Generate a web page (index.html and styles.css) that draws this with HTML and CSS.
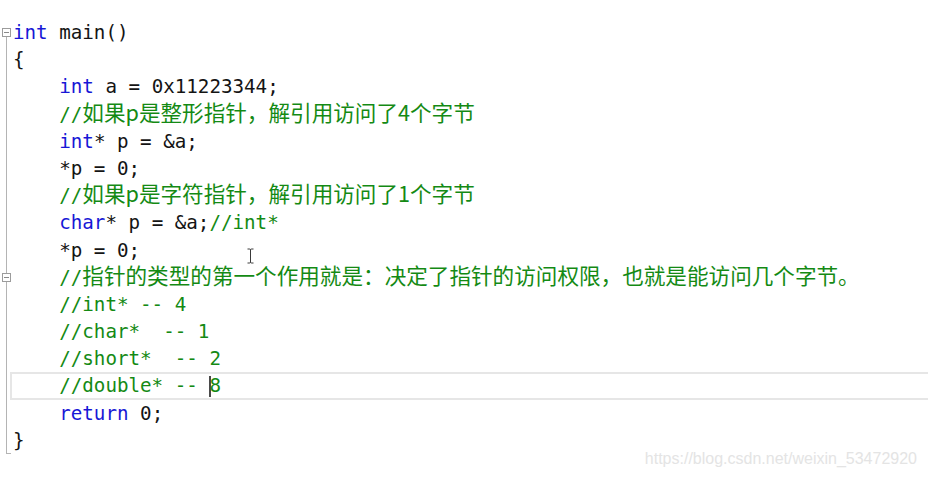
FILE: index.html
```html
<!DOCTYPE html>
<html lang="zh-CN">
<head>
<meta charset="utf-8">
<title>main.c</title>
<link rel="stylesheet" href="styles.css">
</head>
<body>
<div class="editor">
  <svg class="gutter" width="13" height="477" viewBox="0 0 13 477" xmlns="http://www.w3.org/2000/svg">
    <rect x="2.5" y="28.5" width="8" height="8" fill="#fff" stroke="#9c9c9c"/>
    <line x1="4" y1="32.5" x2="9" y2="32.5" stroke="#8a8a8a"/>
    <line x1="6.5" y1="37" x2="6.5" y2="273" stroke="#b4b4b4"/>
    <rect x="2.5" y="273.5" width="8" height="8" fill="#fff" stroke="#9c9c9c"/>
    <line x1="4" y1="277.5" x2="9" y2="277.5" stroke="#8a8a8a"/>
    <line x1="6.5" y1="282" x2="6.5" y2="454" stroke="#b4b4b4"/>
    <line x1="6.5" y1="453.5" x2="11" y2="453.5" stroke="#b4b4b4"/>
  </svg>
  <div class="code">
    <div class="ln"><span class="kw">int</span> main()</div>
    <div class="ln">{</div>
    <div class="ln">    <span class="kw">int</span> a = 0x11223344;</div>
    <div class="ln cm">    //<span class="cj">如果p是整形指针，解引用访问了4个字节</span></div>
    <div class="ln">    <span class="kw">int</span>* p = &amp;a;</div>
    <div class="ln">    *p = 0;</div>
    <div class="ln cm">    //<span class="cj">如果p是字符指针，解引用访问了1个字节</span></div>
    <div class="ln">    <span class="kw">char</span>* p = &amp;a;<span class="cmt">//int*</span></div>
    <div class="ln">    *p = 0;</div>
    <div class="ln cm">    //<span class="cj">指针的类型的第一个作用就是：决定了指针的访问权限，也就是能访问几个字节。</span></div>
    <div class="ln cm">    //int* -- 4</div>
    <div class="ln cm">    //char*  -- 1</div>
    <div class="ln cm">    //short*  -- 2</div>
    <div class="ln cm cur">    //double* -- <span class="caret"></span>8</div>
    <div class="ln">    <span class="kw">return</span> 0;</div>
    <div class="ln">}</div>
  </div>
</div>
<svg class="ibeam" width="9" height="16" viewBox="0 0 9 16" xmlns="http://www.w3.org/2000/svg">
  <path d="M1.5 1 H3.5 Q4.5 1 4.5 2 V14 Q4.5 15 5.5 15 H7.5 M4.5 2 Q4.5 1 5.5 1 H7.5 M4.5 14 Q4.5 15 3.5 15 H1.5" fill="none" stroke="#3a3a3a" stroke-width="1"/>
</svg>
<div class="watermark">https://blog.csdn.net/weixin_53472920</div>
</body>
</html>
```
FILE: styles.css
```css
html, body {
  margin: 0;
  padding: 0;
  background: #ffffff;
}

body {
  width: 928px;
  height: 477px;
  overflow: hidden;
  position: relative;
}

.editor {
  display: flex;
  align-items: flex-start;
}

.gutter {
  flex: 0 0 13px;
  display: block;
}

.code {
  flex: 1 1 auto;
  padding-top: 19px;
  font-family: "DejaVu Sans Mono", "Liberation Mono", monospace;
  font-size: 19.2px;
  color: #141414;
}

.ln {
  height: 27.2px;
  line-height: 27.2px;
  white-space: pre;
}

.kw {
  color: #1717d6;
}

.cm,
.cmt {
  color: #148a14;
}

.cj {
  font-family: "Noto Sans CJK SC", "Noto Sans", sans-serif;
  font-size: 21.6px;
  line-height: 18px;
}

.cur {
  box-sizing: border-box;
  margin-left: -3px;
  padding-left: 1px;
  border: 2px solid #e6e6e6;
  border-right: none;
  line-height: 23.2px;
}

.caret {
  display: inline-block;
  width: 2px;
  height: 21px;
  margin-right: -2px;
  background: #4a4a4a;
  vertical-align: -5px;
}

.ibeam {
  position: absolute;
  left: 246px;
  top: 248px;
}

.watermark {
  position: absolute;
  right: 11px;
  top: 450px;
  font-family: "Liberation Sans", Arial, sans-serif;
  font-size: 16px;
  color: #e4e4e4;
}
```
